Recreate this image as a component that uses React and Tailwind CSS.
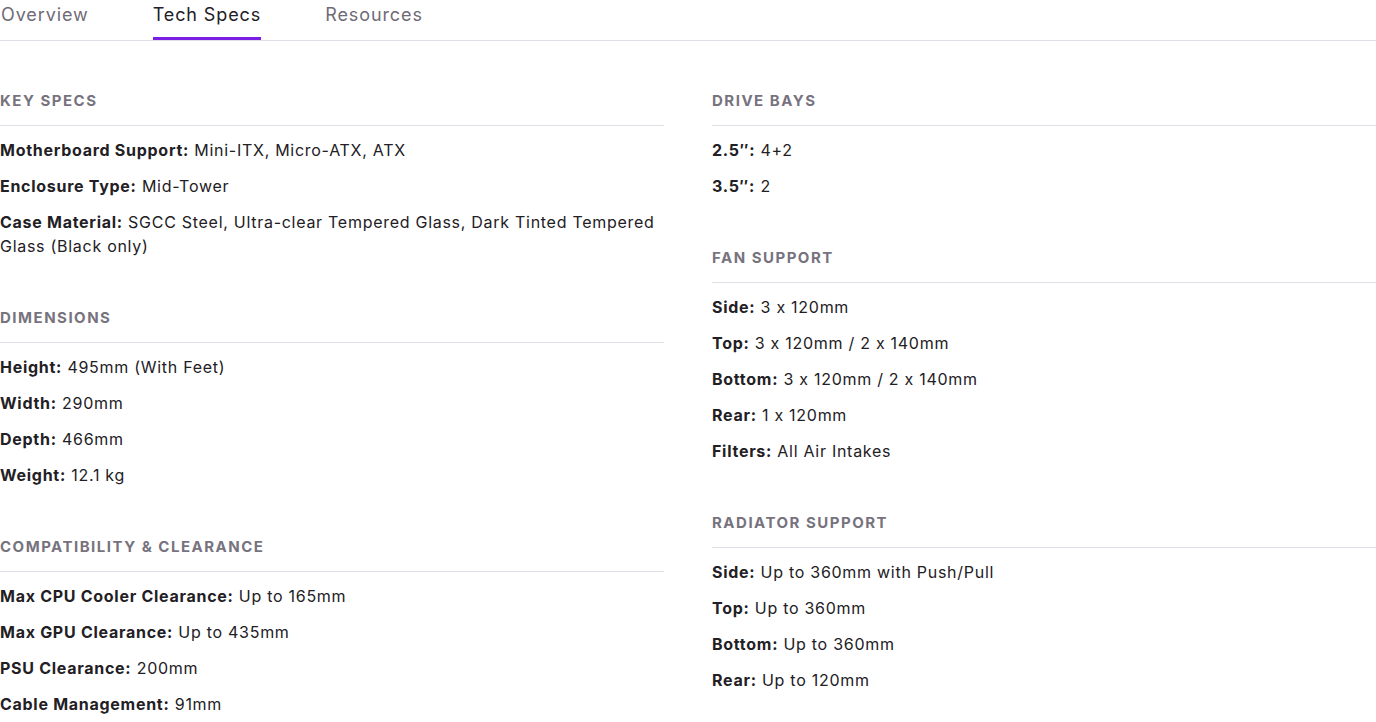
import React from "react";

const left = [
  {
    title: "Key Specs",
    items: [
      ["Motherboard Support:", "Mini-ITX, Micro-ATX, ATX"],
      ["Enclosure Type:", "Mid-Tower"],
      ["Case Material:", "SGCC Steel, Ultra-clear Tempered Glass, Dark Tinted Tempered Glass (Black only)"],
    ],
  },
  {
    title: "Dimensions",
    items: [
      ["Height:", "495mm (With Feet)"],
      ["Width:", "290mm"],
      ["Depth:", "466mm"],
      ["Weight:", "12.1 kg"],
    ],
  },
  {
    title: "Compatibility & Clearance",
    items: [
      ["Max CPU Cooler Clearance:", "Up to 165mm"],
      ["Max GPU Clearance:", "Up to 435mm"],
      ["PSU Clearance:", "200mm"],
      ["Cable Management:", "91mm"],
    ],
  },
];

const right = [
  {
    title: "Drive Bays",
    items: [
      ["2.5\u2033:", "4+2"],
      ["3.5\u2033:", "2"],
    ],
  },
  {
    title: "Fan Support",
    items: [
      ["Side:", "3 x 120mm"],
      ["Top:", "3 x 120mm / 2 x 140mm"],
      ["Bottom:", "3 x 120mm / 2 x 140mm"],
      ["Rear:", "1 x 120mm"],
      ["Filters:", "All Air Intakes"],
    ],
  },
  {
    title: "Radiator Support",
    items: [
      ["Side:", "Up to 360mm with Push/Pull"],
      ["Top:", "Up to 360mm"],
      ["Bottom:", "Up to 360mm"],
      ["Rear:", "Up to 120mm"],
    ],
  },
];

function Section({ s }) {
  return (
    <div className="flex flex-col">
      <h3 className="text-[15px] leading-6 font-bold uppercase tracking-[0.1em] text-[#77737e] pb-3 border-b border-[#e1dee8]">
        {s.title}
      </h3>
      <ul className="flex flex-col gap-3 pt-3">
        {s.items.map(([k, v]) => (
          <li key={k} className="text-[16px] leading-6 text-[#222024] tracking-[0.045em]">
            <span className="font-bold">{k}</span> {v}
          </li>
        ))}
      </ul>
    </div>
  );
}

export default function App() {
  return (
    <div className="bg-white w-[1376px] h-[722px] overflow-hidden" style={{ fontFamily: "Inter, 'Noto Sans', sans-serif" }}>
      <div className="flex gap-16 border-b border-[#e1dee8] h-[41px]">
        <div className="text-[18px] leading-7 pt-px text-[#6f6b76] tracking-[0.05em] pl-px">Overview</div>
        <div className="text-[18px] leading-7 pt-px text-[#222024] tracking-[0.05em] border-b-[3px] border-[#7a1ee6] h-[40px]">Tech Specs</div>
        <div className="text-[18px] leading-7 pt-px text-[#6f6b76] tracking-[0.05em]">Resources</div>
      </div>
      <div className="grid grid-cols-2 gap-12 pt-12">
        <div className="flex flex-col gap-12">
          {left.map((s) => <Section key={s.title} s={s} />)}
        </div>
        <div className="flex flex-col gap-12">
          {right.map((s) => <Section key={s.title} s={s} />)}
        </div>
      </div>
    </div>
  );
}
